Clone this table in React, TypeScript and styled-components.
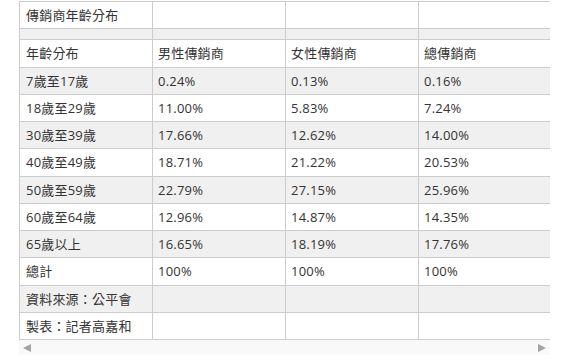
import React from 'react';
import styled, { createGlobalStyle } from 'styled-components';

const GlobalStyle = createGlobalStyle`
  body {
    margin: 0;
    background: #ffffff;
    font-family: "Open Sans", "Noto Sans CJK TC", sans-serif;
  }
`;

const Page = styled.div`
  padding: 1px 0 0 19px;
`;

const ScrollBox = styled.div`
  width: 531px;
  overflow: hidden;
`;

const Table = styled.table`
  border-collapse: collapse;
  table-layout: fixed;
  width: 532px;
  font-size: 13px;
  line-height: 16.25px;
  color: #333;
`;

const Col = styled.col`
  width: 133px;
`;

const Row = styled.tr`
  &:nth-child(even) {
    background: #f0f0f0;
  }
`;

const Cell = styled.td<{ $first?: boolean }>`
  border: 1px solid #cccccc;
  padding: 5px 6px 5px ${(p) => (p.$first ? '6px' : '5px')};
  white-space: nowrap;
  overflow: hidden;
  vertical-align: middle;
  letter-spacing: 0.2px;
`;

const EmptyCell = styled(Cell)`
  padding-top: 0;
  padding-bottom: 0;
  height: 10px;
  line-height: 10px;
`;

const ScrollBar = styled.div`
  width: 531px;
  height: 15px;
  background: #f9f9f9;
  display: flex;
  align-items: center;
  justify-content: space-between;
  padding: 0 4px;
  box-sizing: border-box;
`;

const Arrow = styled.span<{ $dir: 'left' | 'right' }>`
  width: 0;
  height: 0;
  border-top: 4.5px solid transparent;
  border-bottom: 4.5px solid transparent;
  ${(p) =>
    p.$dir === 'left'
      ? 'border-right: 8px solid #a3a3a3;'
      : 'border-left: 8px solid #a3a3a3;'}
`;

const rows: string[][] = [
  ['傳銷商年齡分布', '', '', ''],
  ['', '', '', ''],
  ['年齡分布', '男性傳銷商', '女性傳銷商', '總傳銷商'],
  ['7歲至17歲', '0.24%', '0.13%', '0.16%'],
  ['18歲至29歲', '11.00%', '5.83%', '7.24%'],
  ['30歲至39歲', '17.66%', '12.62%', '14.00%'],
  ['40歲至49歲', '18.71%', '21.22%', '20.53%'],
  ['50歲至59歲', '22.79%', '27.15%', '25.96%'],
  ['60歲至64歲', '12.96%', '14.87%', '14.35%'],
  ['65歲以上', '16.65%', '18.19%', '17.76%'],
  ['總計', '100%', '100%', '100%'],
  ['資料來源：公平會', '', '', ''],
  ['製表：記者高嘉和', '', '', ''],
];

export default function App() {
  return (
    <>
      <GlobalStyle />
      <Page>
        <ScrollBox>
          <Table>
            <colgroup>
              <Col />
              <Col />
              <Col />
              <Col />
            </colgroup>
            <tbody>
              {rows.map((r, i) => (
                <Row key={i}>
                  {r.map((c, j) =>
                    i === 1 ? (
                      <EmptyCell key={j} />
                    ) : (
                      <Cell key={j} $first={j === 0}>
                        {c}
                      </Cell>
                    )
                  )}
                </Row>
              ))}
            </tbody>
          </Table>
        </ScrollBox>
        <ScrollBar>
          <Arrow $dir="left" />
          <Arrow $dir="right" />
        </ScrollBar>
      </Page>
    </>
  );
}
